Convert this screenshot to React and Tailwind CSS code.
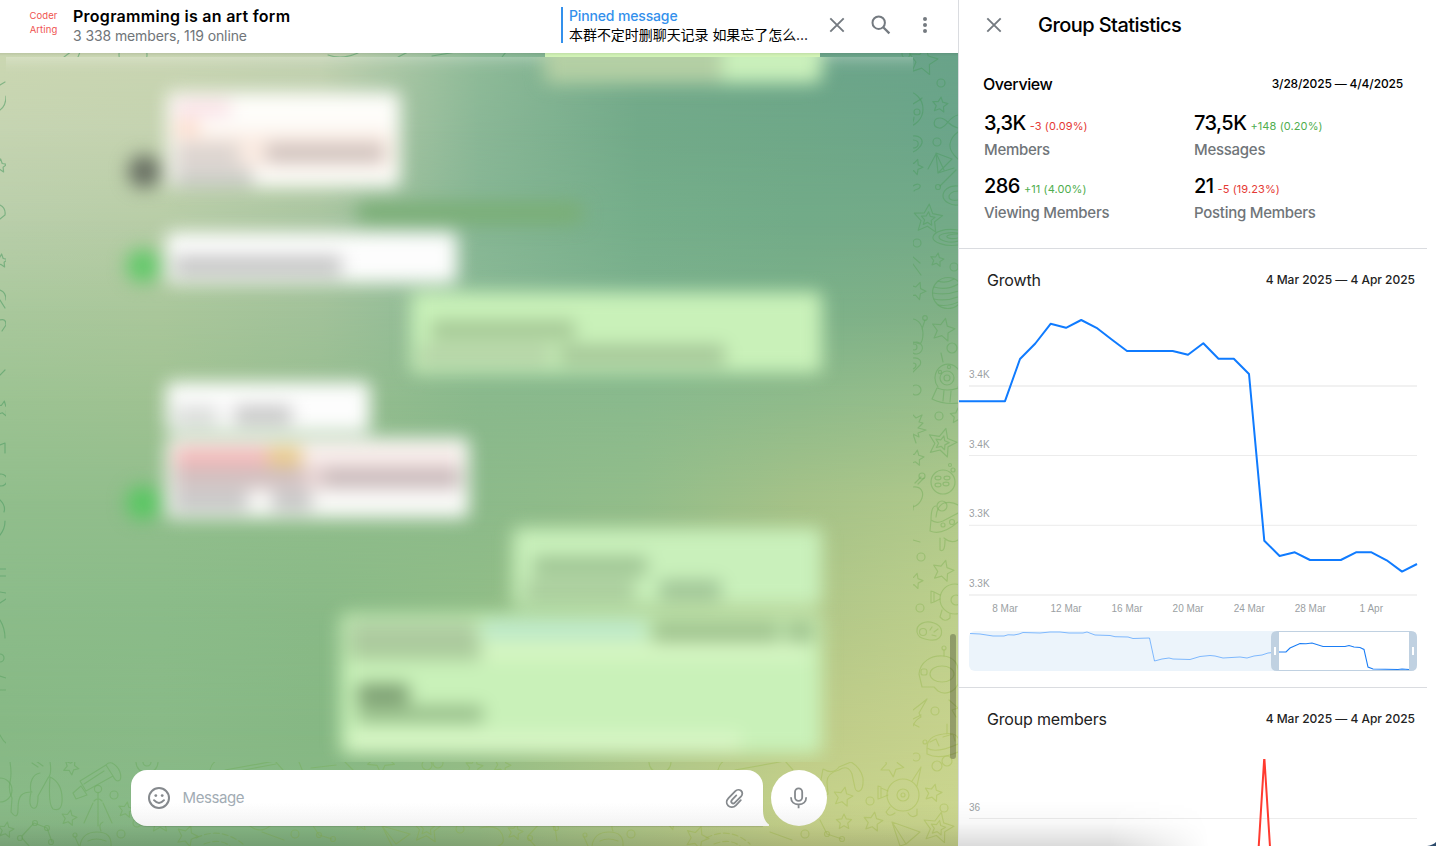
import React from "react";

const MESH = [
  { y: 53, c: ["#cbd7b2", "#c9d5b2", "#c2d1b0", "#8fbb98", "#74aa8b", "#6ca58a", "#69a389"] },
  { y: 130, c: ["#c5d4b1", "#c5d3b0", "#bccfac", "#8ab796", "#72aa89", "#6fa888", "#6ba58a"] },
  { y: 220, c: ["#b9ceaa", "#b8cda7", "#a9c5a0", "#86b694", "#75ae8a", "#72ab88", "#73aa88"] },
  { y: 310, c: ["#a9c89c", "#aac79b", "#a2c29a", "#8ab995", "#7db28e", "#7cb189", "#80b086"] },
  { y: 400, c: ["#9cc392", "#9fc292", "#97be90", "#8ab98c", "#8aba8d", "#8fbb8b", "#98be8a"] },
  { y: 500, c: ["#91be8c", "#92be8c", "#90bd8b", "#8cba8a", "#92bd8a", "#a5c288", "#b0c98b"] },
  { y: 600, c: ["#8cbc8a", "#8bbc89", "#8aba87", "#90bd87", "#a0c188", "#afc688", "#bccf8c"] },
  { y: 720, c: ["#87b985", "#89ba87", "#86b884", "#93bc86", "#aac588", "#bdcb88", "#c6d28d"] },
  { y: 846, c: ["#8aba88", "#88b987", "#88b985", "#98bd85", "#b2c888", "#c8d38b", "#ccd78f"] },
];

function starPath(cx, cy, r, rot = 0, inner = 0.48) {
  const p = [];
  for (let i = 0; i < 10; i++) {
    const a = ((i * 36 - 90 + rot) * Math.PI) / 180;
    const q = i % 2 ? r * inner : r;
    p.push(`${(cx + q * Math.cos(a)).toFixed(1)} ${(cy + q * Math.sin(a)).toFixed(1)}`);
  }
  return `M${p.join("L")}Z`;
}

const STARS = [
  [923, 61, 15, 10], [940, 105, 8, 8], [915, 167, 8, 20], [937, 260, 7, 10], [917, 291, 9, 20],
  [943, 330, 12, 12], [916, 458, 8, 10], [943, 571, 11, 14], [915, 581, 8, 15], [958, 416, 8, 0],
  [892, 765, 12, 30], [843, 797, 10, 12], [933, 793, 9, 14], [844, 822, 8, 0], [873, 822, 10, 10],
  [697, 838, 12, 20], [515, 832, 8, 14], [71, 767, 8, 30], [126, 810, 8, 10], [69, 818, 8, 12],
  [6, 830, 8, 10], [187, 836, 11, 20], [160, 822, 11, 0], [361, 824, 7, 0], [670, 820, 10, 20],
  [381, 760, 14, 36], [474, 767, 9, 10], [502, 765, 9, 20], [3, 409, 8, 10], [0, 166, 7, 5], [1, 261, 7, 5],
];
const DOUBLE_STARS = [[928, 219, 15, 5], [942, 443, 15, 15], [938, 828, 16, 12], [427, 828, 16, 5]];
const RINGS = [
  [941, 83, 4], [937, 142, 4], [938, 187, 2.5], [917, 243, 4], [954, 267, 4], [952, 348, 5], [916, 390, 5],
  [939, 416, 4], [950, 465, 1.5], [953, 470, 2], [921, 557, 4], [920, 608, 4], [935, 711, 4], [916, 757, 4],
  [870, 801, 4], [944, 808, 4], [631, 834, 4], [805, 834, 4], [114, 795, 4], [121, 834, 4], [295, 834, 4],
  [460, 829, 4], [137, 823, 4], [147, 762, 11], [147, 762, 4], [427, 765, 5], [438, 763, 5], [660, 762, 11], [0, 658, 4], [906, 54, 4],
  [917, 112, 3], [0, 790, 12], [133, 55, 14], [1, 480, 6],
];

function Doodles() {
  return (
    <g fill="none" stroke="url(#ink)" strokeWidth="1.2" strokeLinejoin="round" strokeLinecap="round" clipPath="url(#rim)">
      {STARS.map((s, i) => <path key={i} d={starPath(...s)} />)}
      {DOUBLE_STARS.map(([x, y, r, a], i) => (
        <path key={i} d={starPath(x, y, r, a) + starPath(x, y, r * 0.48, a)} />
      ))}
      {RINGS.map(([x, y, r], i) => <circle key={i} cx={x} cy={y} r={r} />)}
      {/* ringed planet, loop, swirls */}
      <circle cx="905" cy="109" r="18" /><path d="M913 104c5-3 8-5 9-6M914 117c0 4-2 6-2 8" />
      <path d="M958 115c-10 2-12 14-19 13s-6-10 1-10 8 8 18 10" />
      <path d="M913 136c6-1 10 3 9 7s-6 8-9 9m0-12c4 0 6 2 5 5s-3 3-5 3" />
      <path d="M958 132q-7 5-8 12t8 15M936 153l2 20 16-5M936 153l16 6M936 153l8 17M952 159l-14 14M936 154l-8 15M956 170l-16 16" />
      <path d="M958 186c-10-1-15 5-15 10s8 10 15 9m0-14c-6 0-9 3-9 6s5 4 9 3" />
      <path d="M958 230c-14-2-24 2-25 7s12 10 25 8m0-12c-10-1-19 1-19 4s10 7 19 4m0-7c-6 0-12 1-11 3s7 2 11 1" />
      <path d="M913 257l7 6M913 264l8 11M913 186c4-3 8-2 7 1s-5 2-6 4" />
      {/* striped ball */}
      <circle cx="948" cy="293" r="15.5" />
      <path d="M938 281q8 3 16-2M934 287q14 4 26-4M933 293q16 3 30-4M934 299q14 3 28-4M938 305q12 2 22-4" />
      {/* antenna bug */}
      <path d="M913 319c6 1 10 7 10 14s-2 10-3 11l-7-2M922 329l3-9M913 343a6 6 0 1 1 0 10" /><circle cx="925" cy="318" r="2.3" />
      <circle cx="914" cy="347" r="3" /><path d="M913 358c6-1 9 3 7 7l-7 7M913 363c4 0 4 4 0 6" />
      {/* space bear */}
      <path d="M941 353l2 9M938 387a13 14 0 1 1 20 0M937 388q10 4 21 0M937 388l-5 11q12 6 27 4M944 390l-1 11M951 391l-1 11" />
      <circle cx="947" cy="378" r="7" /><circle cx="947" cy="378" r="3" /><circle cx="940" cy="372" r="1.6" /><circle cx="949" cy="367" r="1.6" />
      <path d="M913 415l3 3 6-3-3 7 4 1-5 5 8 2-8 3 1 4-6-3 3 9M913 505v5M913 540l7 2" />
      {/* cookie */}
      <circle cx="943" cy="482" r="12" /><ellipse cx="938" cy="478" rx="3" ry="1.8" /><ellipse cx="947" cy="478" rx="3" ry="1.8" /><ellipse cx="938" cy="485" rx="3" ry="1.8" /><ellipse cx="946" cy="484" rx="3" ry="1.8" />
      <path d="M913 487c8-1 11 5 9 11s-6 8-9 9M915 483l6-6M918 484l6-6" /><circle cx="922" cy="476" r="3" />
      {/* rocket */}
      <path d="M936 517q1-11 8-14 8-2 14 2M936 506q-5 0-5 14l-1 11q12 5 28-9M931 520q5 4 12 1l15-8M940 538v12q5 3 5-10M944 538q7 6 14 2" />
      <circle cx="942" cy="506" r="5" /><circle cx="952" cy="522" r="2.5" /><circle cx="943" cy="525" r="2" />
      {/* one-eyed robots */}
      <circle cx="955" cy="599" r="15" /><circle cx="956" cy="600" r="5" /><path d="M940 595l-6-3v10l6-3M934 592l-3-1v12l3-1M942 610l-2 7q5 6 10 1v-4" />
      <circle cx="903" cy="795" r="16" /><circle cx="903" cy="795" r="6" /><circle cx="903" cy="795" r="2" />
      <path d="M888 791l-7-3v10l7-3M881 787l-3-1v13l3-1M912 781l9-14-4 19M890 807l-4 5q3 6 9 1M908 813q4 6 9 2v-6" />
      <path d="M917 632c-1-8 8-12 17-9s9 11 5 15-10 2-14 1-7-2-8-7Z" /><circle cx="923" cy="632" r="3.5" /><path d="M930 630l2-3M934 632l4-3M932 635l4 1" />
      {/* helmet */}
      <path d="M919 674c1-12 12-19 24-18s15 9 15 14v14c-4 9-14 11-20 7l-4-4h-12Z" /><ellipse cx="942" cy="674" rx="12" ry="8" /><rect x="921" y="669" width="6" height="6" rx="2" /><path d="M944 656v-6" /><circle cx="944" cy="648" r="2" />
      <path d="M913 710q8-6 14-11l-8 14 2 4q-6 3-8 9M913 724l6 3M913 719l8-4M949 700l9 8-6 2 4 7" />
      {/* bus */}
      <path d="M927 748q0-12 16-14 12-2 15 4M927 748q8 6 31-4M930 742l6-3 3 7M943 737l10-3 2 7M927 748v6q12 6 31-2M947 734v-10" /><circle cx="937" cy="766" r="5" /><circle cx="947" cy="761" r="5" /><circle cx="925" cy="742" r="2" />
      {/* hand drips */}
      <path d="M823 769q10 6 16-2l12-5q10 6 12 16c1 16-7 15-8 10l-3-14q-4-10-13-4-12 3-12 12l1 12q-5 3-8-9Z" />
      <path d="M10 762q2 12 0 20t2 16l-1 14q7 9 7-3c0-14 4-17 14-17M31 792c-2-10 2-18 9-19M31 792q-3 14 2 16t5-12l10-18q4-4 2-16M50 777q-2 28 3 32 8 3 9-7c1-14-5-22-12-25M32 763l6 4M36 761l7 5" />
      {/* telescope */}
      <path d="M80 781l26-16 7 11-27 15ZM73 793l8-7 6 9-11 4ZM106 765q2-3 6-2c8 4 10 13 8 17q-4 3-7-4M84 784l20-13M98 793v33M93 803l-9 20M103 803l9 20M94 801q4-4 8 0" /><circle cx="98" cy="789" r="3.6" />
      {/* constellations */}
      <path d="M22 836l12-13 13 5 5 14M22 838l7 8M528 836l13-14 14 5 2 14M528 838l8 9M310 821l9 14 13 4M820 820l7 14 15 5" />
      <circle cx="35" cy="823" r="2.5" /><circle cx="47" cy="828" r="2.5" /><circle cx="51" cy="842" r="2.5" /><circle cx="20" cy="838" r="2.5" />
      <circle cx="530" cy="838" r="2.5" /><circle cx="542" cy="822" r="2.5" /><circle cx="556" cy="828" r="2.5" /><circle cx="319" cy="835" r="2.5" /><circle cx="333" cy="839" r="2.5" /><circle cx="827" cy="834" r="2.5" /><circle cx="842" cy="839" r="2.5" />
      {/* bowls and comets */}
      <path d="M80 846q2-14 17-14t14 14M88 841q8-4 18 0M75 837l4 9M101 831q-3-7 2-9M592 846q2-14 17-14t14 14M600 841q8-4 18 0M584 837l4 9M613 831q-3-7 2-9" /><circle cx="75" cy="835" r="2" /><circle cx="585" cy="835" r="2" />
      <path strokeDasharray="6 3" d="M196 838q24-12 47 6M204 844q16-6 26 2M706 838q24-12 44 6M714 844q16-6 26 2" />
      <path d="M250 826q10 8 20 0M480 828q18-4 22 6t-4 12M262 832l22 8M770 832l22 8" />
      <path d="M382 826l28 8-14 10ZM382 826l10 20M892 822l28 10-14 12ZM892 822l8 24 6-2" />
      <path d="M210 770q2-10 14-12M225 770l50-9 8 9M228 773l48-9M299 762l4 10M311 768l25-3M345 762l8 8M718 770q2-10 14-12M735 770l50-9 8 9M64 57l8-6M78 57l2-5M328 55q14 5 30-2M398 57l12-6M432 56l30-5M502 57l4-5" />
      <path d="M0 110q6-4 6-14M0 85l5-3M0 205q6 3 5 10l-5 4M0 290q6 2 6 10M0 300l5 8M0 320q6-2 6 5l-4 6M0 375l5-5M0 445l5-2v10M0 500q6 6 4 12M0 535q5-6 5-14M0 569h6M0 576h6M0 592l6 1M0 603l6-4M0 620q5 8 5 18M0 676l6 2M0 690h6M0 735q3 6 6 8" />
    </g>
  );
}

function Wallpaper() {
  return (
    <svg className="absolute inset-0 h-full w-full" viewBox="0 53 958 793" preserveAspectRatio="none">
      <defs>
        {MESH.map((row, i) => (
          <linearGradient key={i} id={`row${i}`} x1="0" x2="1" y1="0" y2="0">
            {row.c.map((c, j) => <stop key={j} offset={j / 6} stopColor={c} />)}
          </linearGradient>
        ))}
        {MESH.slice(1).map((row, i) => (
          <React.Fragment key={i}>
            <linearGradient id={`fade${i + 1}`} gradientUnits="userSpaceOnUse" x1="0" x2="0" y1={MESH[i].y} y2={row.y}>
              <stop offset="0" stopColor="#fff" stopOpacity="0" /><stop offset="1" stopColor="#fff" />
            </linearGradient>
            <mask id={`mask${i + 1}`} maskUnits="userSpaceOnUse" x="0" y="53" width="958" height="793">
              <rect x="0" y="53" width="958" height="793" fill={`url(#fade${i + 1})`} />
            </mask>
          </React.Fragment>
        ))}
        <linearGradient id="ink" gradientUnits="userSpaceOnUse" x1="580" y1="300" x2="800" y2="800">
          <stop offset="0" stopColor="#4b9a62" stopOpacity=".55" />
          <stop offset=".5" stopColor="#6fac60" stopOpacity=".55" />
          <stop offset="1" stopColor="#a9bf55" stopOpacity=".5" />
        </linearGradient>
        <clipPath id="rim"><path clipRule="evenodd" d="M0 53H958V846H0ZM6 57V762H913V57Z" /></clipPath>
      </defs>
      {MESH.map((row, i) => (
        <rect key={i} x="0" y="53" width="958" height="793" fill={`url(#row${i})`} mask={i ? `url(#mask${i})` : undefined} />
      ))}
      <Doodles />
    </svg>
  );
}

const Line = ({ className }) => <div className={`shrink-0 rounded ${className}`} />;

function Messages() {
  return (
    <div className="relative h-[705px] w-[907px] overflow-hidden">
      <div className="-mt-5 flex h-[725px] flex-col blur-[9px]">
        <div className="-mx-5 -mt-5 h-[40px] shrink-0 bg-white/45" />
        <div className="-mt-4 mr-[91px] flex h-[42px] w-[278px] shrink-0 items-center self-end rounded-lg bg-[#caf0bb]">
          <Line className="h-10 w-[178px] bg-[#b4cfa4]" />
        </div>
        <div className="mt-[9px] ml-[122px] flex h-[95px] shrink-0 items-end gap-[6px]">
          <div className="-mb-[1px] size-[33px] rounded-full bg-[#686f63]" />
          <div className="flex h-full w-[233px] flex-col rounded-md bg-[#fefdfa] px-2 pt-2">
            <Line className="h-[16px] w-[56px] bg-[#f9dfe5]" />
            <Line className="mt-[6px] h-[22px] w-[24px] bg-[#fcd0bb]" />
            <div className="-mt-3 flex h-[36px] shrink-0 justify-between rounded bg-[#fbece3] pt-[12px]">
              <Line className="h-[20px] w-[64px] bg-[#d9d2ce]" />
              <Line className="mr-2 h-[18px] w-[118px] bg-[#cdc0bc]" />
            </div>
            <Line className="h-[18px] w-[78px] bg-[#cbcbc8]" />
          </div>
        </div>
        <div className="mt-[15px] ml-[350px] h-[22px] w-[228px] shrink-0 rounded-full bg-[#7aae76]" />
        <div className="mt-[8px] ml-[120px] flex h-[51px] shrink-0 items-end gap-[6px]">
          <div className="size-[34px] rounded-full bg-[#64c96b]" />
          <div className="flex h-full w-[291px] flex-col rounded-md bg-[#fdfdfd] px-2 pt-[24px]">
            <Line className="h-[20px] w-[168px] bg-[#c4c4c4]" />
          </div>
        </div>
        <div className="mt-[9px] mr-[91px] flex h-[81px] w-[411px] shrink-0 flex-col self-end rounded-md bg-[#c9f1b9] px-2 pt-[29px]">
          <Line className="ml-3 h-[18px] w-[144px] bg-[#a3c594]" />
          <div className="mt-[6px] flex gap-2">
            <Line className="h-[20px] w-[132px] bg-[#b4d1a6]" />
            <Line className="h-[20px] w-[166px] bg-[#a4c597]" />
          </div>
        </div>
        <div className="mt-[9px] ml-[160px] flex h-[50px] w-[204px] shrink-0 flex-col rounded-md bg-[#fdfdfd] px-2 pt-[24px]">
          <div className="flex gap-4">
            <Line className="h-[20px] w-[44px] bg-[#dadcda]" />
            <Line className="h-[18px] w-[58px] bg-[#c4c4c4]" />
          </div>
        </div>
        <div className="mt-[6px] ml-[120px] flex h-[80px] shrink-0 items-end gap-[6px]">
          <div className="-mb-[2px] size-[34px] rounded-full bg-[#5ac763]" />
          <div className="flex h-full w-[303px] flex-col rounded-md bg-[#fafaf8] px-2 pt-2">
            <div className="flex h-[20px] shrink-0 items-end bg-[#f8ecea]">
              <Line className="h-[18px] w-[94px] bg-[#f2b6b6]" />
              <Line className="h-[19px] w-[34px] bg-[#e8c886]" />
            </div>
            <div className="flex h-[23px] shrink-0 items-center justify-between bg-[#e8d4d4]">
              <Line className="h-[18px] w-[130px] bg-[#cdbcbc]" />
              <Line className="h-[18px] w-[138px] bg-[#c7b8b9]" />
            </div>
            <div className="flex gap-6">
              <Line className="mt-[2px] h-[20px] w-[74px] bg-[#c4c4c4]" />
              <Line className="mt-[2px] h-[20px] w-[40px] bg-[#c4c4c4]" />
            </div>
          </div>
        </div>
        <div className="mt-[10px] mr-[91px] flex h-[78px] w-[309px] shrink-0 flex-col self-end rounded-md bg-[#c9f0bb] px-3 pt-[29px]">
          <Line className="ml-2 h-[18px] w-[114px] bg-[#9cc191]" />
          <div className="mt-[6px] flex gap-6">
            <Line className="h-[18px] w-[110px] bg-[#a5c798]" />
            <Line className="h-[18px] w-[62px] bg-[#9cc093]" />
          </div>
        </div>
        <div className="mt-[8px] mr-[91px] flex h-[140px] w-[481px] shrink-0 flex-col self-end rounded-md bg-[#c9f1b9] px-2 pt-2">
          <div className="flex h-[20px] shrink-0 justify-between">
            <Line className="h-5 w-[128px] bg-[#adcaa0]" />
            <Line className="h-4 w-[162px] bg-[#bbe6cc]" />
            <Line className="h-5 w-[128px] bg-[#9dc08c]" />
            <Line className="h-5 w-[28px] bg-[#9cbf8b]" />
          </div>
          <div className="flex shrink-0">
            <Line className="h-[18px] w-[132px] bg-[#abcb9c]" />
            <Line className="h-[18px] w-[328px] bg-[#d6f6c3]" />
          </div>
          <Line className="mt-[24px] ml-2 h-[20px] w-[52px] bg-[#7a9c70]" />
          <Line className="mt-[2px] ml-2 h-[16px] w-[126px] bg-[#94ba87]" />
          <Line className="mt-[10px] h-[20px] w-[392px] bg-[#d8f6c6]" />
        </div>
      </div>
    </div>
  );
}

const X = () => (
  <svg className="size-[24px]" viewBox="0 0 24 24" fill="none" stroke="#747a80" strokeWidth="1.9">
    <path d="M5.3 5.3l13.4 13.4M18.7 5.3L5.3 18.7" />
  </svg>
);

function ChatHeader() {
  return (
    <header className="flex h-[53px] shrink-0 items-center bg-white">
      <div className="ml-[25px] flex w-[37px] flex-col items-center pb-[8px] text-[9.5px] leading-[13.5px] tracking-[0.1px] text-[#ef5350]">
        <span>Coder</span>
        <span>Arting</span>
      </div>
      <div className="ml-[11px] flex-1 pb-[1px]">
        <div className="text-[16px] leading-[20px] font-semibold tracking-[0.27px] text-black">Programming is an art form</div>
        <div className="text-[14px] leading-[20px] tracking-[-0.1px] text-[#707579]">3 338 members, 119 online</div>
      </div>
      <div className="flex w-[264px] gap-[6px] self-start pt-[7px]">
        <div className="h-[36px] w-[2px] bg-[#3390ec]" />
        <div className="text-[14px]">
          <div className="leading-[18px] font-medium tracking-[-0.15px] text-[#3390ec]">Pinned message</div>
          <div className="leading-[20px] tracking-[-0.05px] whitespace-nowrap text-black">本群不定时删聊天记录 如果忘了怎么...</div>
        </div>
      </div>
      <div className="mr-[21px] flex items-center gap-[20px] pb-[3px]">
        <X />
        <svg className="size-[24px]" viewBox="0 0 24 24" fill="none" stroke="#747a80" strokeWidth="2">
          <circle cx="9.7" cy="9.7" r="6.2" /><path d="M14.2 14.2l6.2 6.2" strokeWidth="2.3" />
        </svg>
        <svg className="size-[24px]" viewBox="0 0 24 24" fill="#747a80">
          <circle cx="12" cy="6" r="2" /><circle cx="12" cy="12" r="2" /><circle cx="12" cy="18" r="2" />
        </svg>
      </div>
    </header>
  );
}

function Composer() {
  return (
    <div className="relative mt-[8px] ml-[131px] flex gap-[8px]">
      <div className="relative flex h-[56px] w-[632px] items-center rounded-2xl rounded-br-none bg-linear-to-b from-white from-60% to-[#fbfbfb] pr-[16px] pl-[15.5px] shadow-[0_1px_1px_rgba(0,0,0,0.12)]">
        <svg className="size-[24px]" viewBox="0 0 24 24" fill="none" stroke="#85898d" strokeWidth="2">
          <circle cx="12" cy="12" r="10" /><path d="M7 14.2q5 5.6 10 0" strokeLinecap="round" />
          <circle cx="8.8" cy="9.6" r="1.4" fill="#85898d" stroke="none" /><circle cx="15.2" cy="9.6" r="1.4" fill="#85898d" stroke="none" />
        </svg>
        <span className="ml-[12px] flex-1 text-[15px] tracking-[-0.4px] text-[#a2acb4]">Message</span>
        <svg className="size-[24px]" viewBox="0 0 24 24" fill="none" stroke="#85898d" strokeWidth="1.8" strokeLinecap="round">
          <path d="M18.8 14.6l-4.9 5.1c-2.4 2.4-5.8 2.4-7.8.4s-1.9-5.2.4-7.6l6.8-7c1.6-1.7 4.2-1.7 5.8-.3s1.6 3.8 0 5.5l-6.2 6.300c-1 1-2.300 1-3.100.2s-.7-2 .2-3l4.300-4.400" transform="translate(-1 -.4)" />
        </svg>
        <svg className="absolute -right-[6px] bottom-0 h-[18px] w-[6.5px]" viewBox="0 0 6.5 18" fill="#fbfbfb">
          <path d="M0 0c0 9 1.5 13 6 16.5q.5 1.5-1 1.5H0Z" />
        </svg>
      </div>
      <div className="flex size-[56px] items-center justify-center rounded-full bg-linear-to-b from-white from-60% to-[#fbfbfb]">
        <svg className="size-[24px]" viewBox="0 0 24 24" fill="none" stroke="#85898d" strokeWidth="1.8">
          <rect x="8" y="2.3" width="7.2" height="12.6" rx="3.6" /><path d="M4 11.2c0 4.7 3.2 7.3 7.6 7.3s7.6-2.6 7.6-7.3M11.6 18.5v3.8" />
        </svg>
      </div>
    </div>
  );
}

const Stat = ({ value, delta, up, label }) => (
  <div>
    <div className="flex h-[27px] items-baseline gap-[4px]">
      <span className="text-[20px] leading-[27px] font-medium tracking-[-0.55px] text-black">{value}</span>
      <span className={`text-[11px] tracking-[0.1px] ${up ? "text-[#4fae4e]" : "text-[#e53935]"}`}>{delta}</span>
    </div>
    <div className="h-[36px] text-[15px] leading-[26px] font-medium tracking-[-0.27px] text-[#707579]">{label}</div>
  </div>
);

const GROWTH = [[959, 401.2], [1005, 401.2], [1020, 359], [1035.3, 343.5], [1050.6, 323.8], [1066, 327.8], [1081.2, 320], [1096.5, 327.8], [1111.7, 339.5], [1127, 351], [1172.7, 351], [1188, 354.8], [1203.3, 343.3], [1218.5, 358.8], [1233.8, 358.8], [1249, 374], [1264.3, 540.8], [1279.6, 556], [1294.8, 552.3], [1310, 560], [1340.8, 560], [1356, 552.3], [1371.5, 552.3], [1386.7, 560.3], [1402, 571.6], [1417, 564]];
const OVERVIEW = "970,633.5 980,634 993,636 1004,636 1008,634.8 1014,635 1019,634 1023,632.5 1040,633 1050,632 1060,632 1069,633 1083,633 1087,632 1095,635 1110,635.5 1115,636.7 1128,637 1133,638.5 1149.5,638 1154.5,661 1162,659 1169,658 1173,659 1190,659.5 1200,656.5 1210,655.5 1215,656 1223,658 1240,657 1247,658 1254,656 1262,655 1268,653 1278,652 1286,652 1290,648 1300,643.5 1306,643.7 1312,643 1323,646.5 1345,646.5 1349,645.5 1354,647 1360,647.5 1364,649.5 1368,667 1373,669 1398,669.5 1402,669 1409,669.5";

const ChartTitle = ({ children }) => (
  <div className="flex h-[24px] items-center justify-between pr-[12px] pl-[28px] text-[#222]">
    <h3 className="text-[16px] tracking-[-0.17px]">{children}</h3>
    <span className="text-[12px] font-medium tracking-[-0.02px]">4 Mar 2025 — 4 Apr 2025</span>
  </div>
);

function GrowthChart() {
  return (
    <svg className="block h-[395px] w-[468px]" viewBox="959 292 468 395" fontFamily="'Liberation Sans', Arial, sans-serif" fontSize="10" fill="#9b9fa3">
      <g stroke="#ececec" strokeWidth="1">
        <path d="M969 386H1417" strokeWidth="1.4" /><path d="M969 455.5H1417M969 525.3H1417" />
        <path d="M969 595H1417" stroke="#f2f2f2" strokeWidth="2" />
      </g>
      <text x="969" y="378">3.4K</text><text x="969" y="448">3.4K</text><text x="969" y="517">3.3K</text><text x="969" y="587">3.3K</text>
      <g textAnchor="middle">
        {["8 Mar", "12 Mar", "16 Mar", "20 Mar", "24 Mar", "28 Mar", "1 Apr"].map((t, i) => (
          <text key={t} x={1005 + i * 61.05} y="612">{t}</text>
        ))}
      </g>
      <polyline points={GROWTH.join(" ")} fill="none" stroke="#0f7bff" strokeWidth="2" strokeLinejoin="round" />
      <rect x="969" y="631" width="448" height="40" rx="6" fill="#ecf4fb" />
      <rect x="1279" y="632" width="130" height="38" fill="#fff" />
      <path d="M1279 631.5H1409M1279 670.5H1409" stroke="#c0d1e1" />
      <polyline points={OVERVIEW} fill="none" stroke="#0f7bff" strokeWidth="1" strokeOpacity=".5" clipPath="url(#dim)" />
      <polyline points={OVERVIEW} fill="none" stroke="#1a7df5" strokeWidth="1.1" clipPath="url(#lit)" />
      <clipPath id="dim"><rect x="960" y="625" width="311" height="50" /></clipPath>
      <clipPath id="lit"><rect x="1279" y="625" width="130" height="50" /></clipPath>
      <path d="M1279 631h-2q-6 0-6 6v28q0 6 6 6h2ZM1409 631h2q6 0 6 6v28q0 6-6 6h-2Z" fill="#c0d1e1" />
      <path d="M1274 647h2v8h-2ZM1412 647h2v8h-2Z" fill="#fff" />
    </svg>
  );
}

function Stats() {
  return (
    <aside className="relative flex w-[477px] flex-col overflow-hidden bg-white">
      <div className="flex h-[50px] shrink-0 items-center pl-[23px]">
        <X />
        <h2 className="ml-[32px] text-[20px] font-medium tracking-[-0.56px] text-black">Group Statistics</h2>
      </div>
      <section className="h-[199px] w-[468px] shrink-0 border-b border-[#dadce0] pt-[22px] pl-[24px]">
        <div className="flex h-[24px] items-center justify-between pr-[24px] text-black">
          <h3 className="text-[16px] font-medium tracking-[-0.4px]">Overview</h3>
          <span className="text-[12px] font-medium tracking-[-0.15px]">3/28/2025 — 4/4/2025</span>
        </div>
        <div className="mt-[14px] ml-px grid grid-cols-[210px_1fr]">
          <Stat value="3,3K" delta="-3 (0.09%)" label="Members" />
          <Stat value="73,5K" delta="+148 (0.20%)" up label="Messages" />
          <Stat value="286" delta="+11 (4.00%)" up label="Viewing Members" />
          <Stat value="21" delta="-5 (19.23%)" label="Posting Members" />
        </div>
      </section>
      <section className="h-[439px] w-[468px] shrink-0 border-b border-[#dadce0] pt-[19px]">
        <ChartTitle>Growth</ChartTitle>
        <GrowthChart />
      </section>
      <section className="w-[468px] shrink-0 pt-[19px]">
        <ChartTitle>Group members</ChartTitle>
        <svg className="block h-[115px] w-[468px]" viewBox="959 731 468 115">
          <path d="M969 818.5H1417" stroke="#ececec" />
          <text x="969" y="811" fontFamily="'Liberation Sans', Arial, sans-serif" fontSize="10" fill="#9b9fa3">36</text>
          <clipPath id="plot"><rect x="959" y="759" width="468" height="87" /></clipPath>
          <path d="M1258.5 850L1264.3 757L1270.2 850" fill="none" stroke="#ff3b30" strokeWidth="2" clipPath="url(#plot)" />
        </svg>
      </section>
      <div className="pointer-events-none absolute bottom-0 left-0 h-[46px] w-[250px] bg-linear-to-t from-black/14 via-black/3 to-transparent [mask-image:linear-gradient(to_right,black_60%,transparent)]" />
      <svg className="absolute right-0 bottom-0 h-[4px] w-[9px]" viewBox="0 0 9 4"><path d="M0 4Q6 3 9 0V4Z" fill="#2c4a6b" /></svg>
    </aside>
  );
}

export default function App() {
  return (
    <div className="flex h-[846px] w-[1436px] overflow-hidden bg-white font-['Inter','Noto_Sans_CJK_SC',sans-serif]">
      <main className="flex w-[959px] shrink-0 flex-col border-r border-[#dadce0]">
        <ChatHeader />
        <div className="relative flex-1 overflow-hidden">
          <Wallpaper />
          <div className="relative flex flex-col">
            <div className="ml-[545px] h-[4px] w-[275px] bg-[#d2f3b6]" />
            <div className="pl-[6px]"><Messages /></div>
            <Composer />
          </div>
          <div className="pointer-events-none absolute inset-x-0 top-0 h-[3px] bg-linear-to-b from-black/8 to-transparent" />
          <div className="pointer-events-none absolute inset-x-0 bottom-0 h-[44px] bg-linear-to-t from-black/14 via-black/3 to-transparent" />
          <div className="absolute top-[581px] right-[2px] h-[125px] w-[6px] rounded-full bg-black/25" />
        </div>
      </main>
      <Stats />
    </div>
  );
}
